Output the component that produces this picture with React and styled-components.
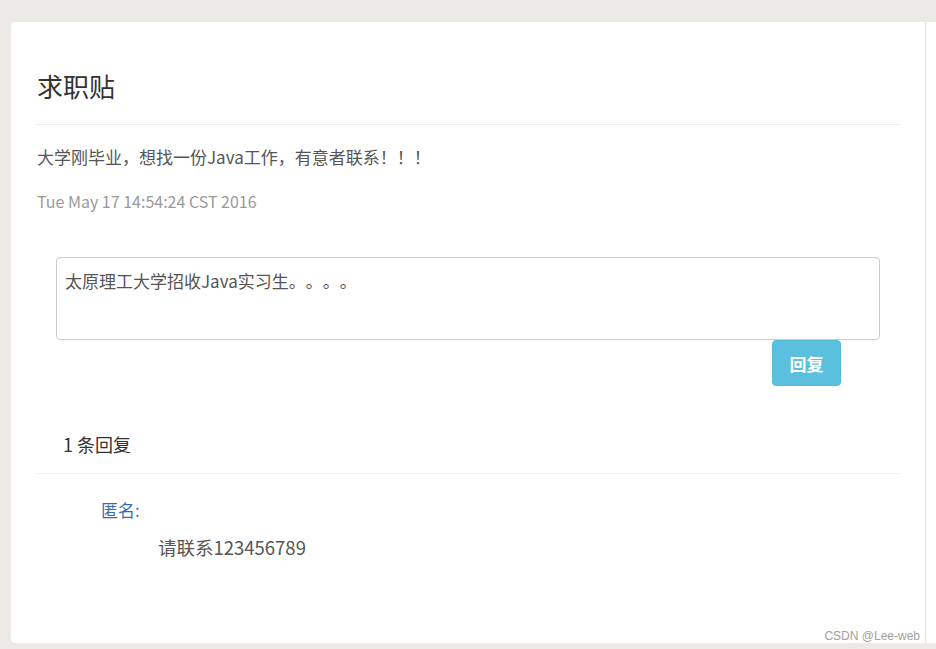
import React, { useState } from 'react'
import styled, { createGlobalStyle } from 'styled-components'

const GlobalStyle = createGlobalStyle`
  html, body {
    margin: 0;
    padding: 0;
    background: #ebeae4;
    font-family: "Noto Sans CJK SC", "Liberation Sans", sans-serif;
    text-spacing-trim: space-all;
  }
  * { box-sizing: border-box; }
`

function App() {
  const [reply, setReply] = useState('太原理工大学招收Java实习生。。。。')

  return (
    <Page>
      <GlobalStyle />
      <Row>
        <Card>
          <Title>求职贴</Title>
          <Divider />
          <PostBody>大学刚毕业，想找一份Java工作，有意者联系！！！</PostBody>
          <PostDate>Tue May 17 14:54:24 CST 2016</PostDate>
          <ReplyForm onSubmit={e => e.preventDefault()}>
            <ReplyInput value={reply} onChange={e => setReply(e.target.value)} />
            <Actions>
              <ReplyButton type="submit">回复</ReplyButton>
            </Actions>
          </ReplyForm>
          <ReplyCount>1 条回复</ReplyCount>
          <Divider />
          <Comment>
            <Author>匿名:</Author>
            <CommentText>请联系123456789</CommentText>
          </Comment>
        </Card>
        <Gutter />
      </Row>
      <Watermark>CSDN @Lee-web</Watermark>
    </Page>
  )
}

const Page = styled.div`
  position: relative;
  padding: 22px 0 6px 11px;
`

const Row = styled.div`
  display: flex;
  height: 621px;
`

const Card = styled.div`
  flex: 1;
  background: #fff;
  border-radius: 4px 0 0 4px;
  padding: 0 26px;
  display: flex;
  flex-direction: column;
`

const Gutter = styled.div`
  width: 11px;
  background: #fff;
  border-left: 1px solid #e4e4e4;
`

const Title = styled.h1`
  margin: 46px 0 20px;
  font-size: 26px;
  line-height: 36px;
  font-weight: 400;
  color: #333;
`

const Divider = styled.div`
  height: 1px;
  background: #eee;
`

const PostBody = styled.p`
  margin: 21px 0 0;
  font-size: 17px;
  line-height: 22px;
  color: #555;
`

const PostDate = styled.p`
  margin: 22px 0 0;
  font-size: 16px;
  line-height: 22px;
  color: #999;
`

const ReplyForm = styled.form`
  margin: 45px 19px 0;
  display: flex;
  flex-direction: column;
`

const ReplyInput = styled.textarea`
  height: 83px;
  width: 100%;
  padding: 12px 8px;
  border: 1px solid #ccc;
  border-radius: 4px;
  font-family: inherit;
  font-size: 17px;
  line-height: 22px;
  color: #555;
  resize: none;
  outline: none;
  text-spacing-trim: space-all;
`

const Actions = styled.div`
  display: flex;
  justify-content: flex-end;
  padding-right: 39px;
`

const ReplyButton = styled.button`
  width: 69px;
  height: 46px;
  border: 1px solid #56bbd9;
  border-radius: 4px;
  background: #5bc0de;
  color: #fff;
  font-family: inherit;
  font-size: 17px;
  font-weight: 700;
  cursor: pointer;
`

const ReplyCount = styled.div`
  margin: 46px 0 17px 26px;
  font-size: 18px;
  line-height: 24px;
  color: #333;
`

const Comment = styled.div`
  padding: 25px 0 0 64px;
`

const Author = styled.div`
  font-size: 17px;
  line-height: 22px;
  color: #3a6cb3;
`

const CommentText = styled.div`
  margin: 14px 0 0 57px;
  font-size: 18.5px;
  line-height: 24px;
  color: #555;
`

const Watermark = styled.div`
  position: absolute;
  right: 16px;
  bottom: 6px;
  font-family: "Liberation Sans", Arial, sans-serif;
  font-size: 12px;
  color: #a0a0a0;
`

export default App
